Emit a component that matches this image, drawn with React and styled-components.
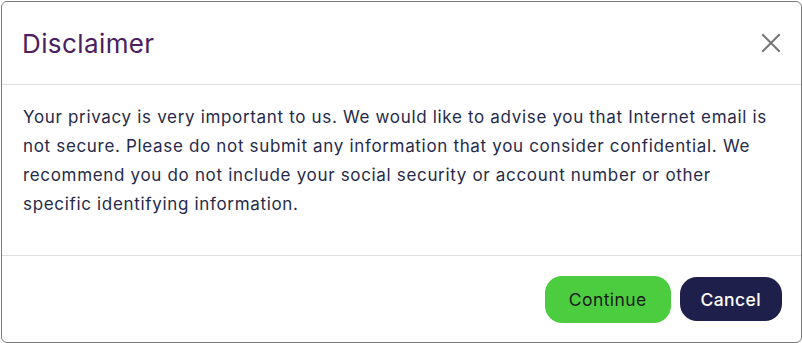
import React from 'react'
import styled, { createGlobalStyle } from 'styled-components'

const Global = createGlobalStyle`
  html, body {
    margin: 0;
    padding: 0;
    background: #ffffff;
    font-family: Inter, "Noto Sans", sans-serif;
  }
`

const Modal = styled.div`
  box-sizing: border-box;
  width: 801px;
  height: 342px;
  margin: 1px 0 0 1px;
  border: 1px solid #7a7a7a;
  border-radius: 6px;
  background: #fff;
  display: flex;
  flex-direction: column;
`

const Header = styled.div`
  display: flex;
  align-items: center;
  justify-content: space-between;
  height: 82px;
  padding: 0 20px 0 20px;
  border-bottom: 1px solid #dedede;
`

const Title = styled.h2`
  margin: 0;
  font-size: 26px;
  letter-spacing: 0.4px;
  font-weight: 400;
  color: #4a2060;
`

const CloseButton = styled.button`
  border: none;
  background: none;
  padding: 0;
  width: 20px;
  height: 20px;
  display: flex;
  align-items: center;
  justify-content: center;
  cursor: pointer;
`

const Body = styled.div`
  height: 171px;
  box-sizing: border-box;
  padding: 18px 22px 0 21px;
  border-bottom: 1px solid #dedede;
`

const Text = styled.p`
  margin: 0;
  font-size: 17px;
  letter-spacing: 0.67px;
  line-height: 29px;
  color: #262a4a;
`

const Footer = styled.div`
  flex: 1;
  display: flex;
  align-items: center;
  justify-content: flex-end;
  gap: 9px;
  padding: 0 19px 0 0;
`

const Button = styled.button`
  font-family: inherit;
  border: none;
  cursor: pointer;
  font-size: 17.5px;
  letter-spacing: 0.4px;
  border-radius: 17px;
  background: ${p => (p.$primary ? '#4ccd3f' : '#1f1f4b')};
  color: ${p => (p.$primary ? '#1a1a1a' : '#ffffff')};
  font-weight: ${p => (p.$primary ? 400 : 500)};
  height: ${p => (p.$primary ? '47px' : '44px')};
  padding: ${p => (p.$primary ? '0 24px' : '0 21px')};
`

export default function App() {
  return (
    <>
      <Global />
      <Modal>
        <Header>
          <Title>Disclaimer</Title>
          <CloseButton aria-label="Close">
            <svg width="20" height="20" viewBox="0 0 20 20">
              <path d="M2 2 L18 18 M18 2 L2 18" stroke="#777" strokeWidth="2" strokeLinecap="square" />
            </svg>
          </CloseButton>
        </Header>
        <Body>
          <Text>
            Your privacy is very important to us. We would like to advise you that Internet email is
            not secure. Please do not submit any information that you consider confidential. We
            recommend you do not include your social security or account number or other specific
            identifying information.
          </Text>
        </Body>
        <Footer>
          <Button $primary>Continue</Button>
          <Button>Cancel</Button>
        </Footer>
      </Modal>
    </>
  )
}
